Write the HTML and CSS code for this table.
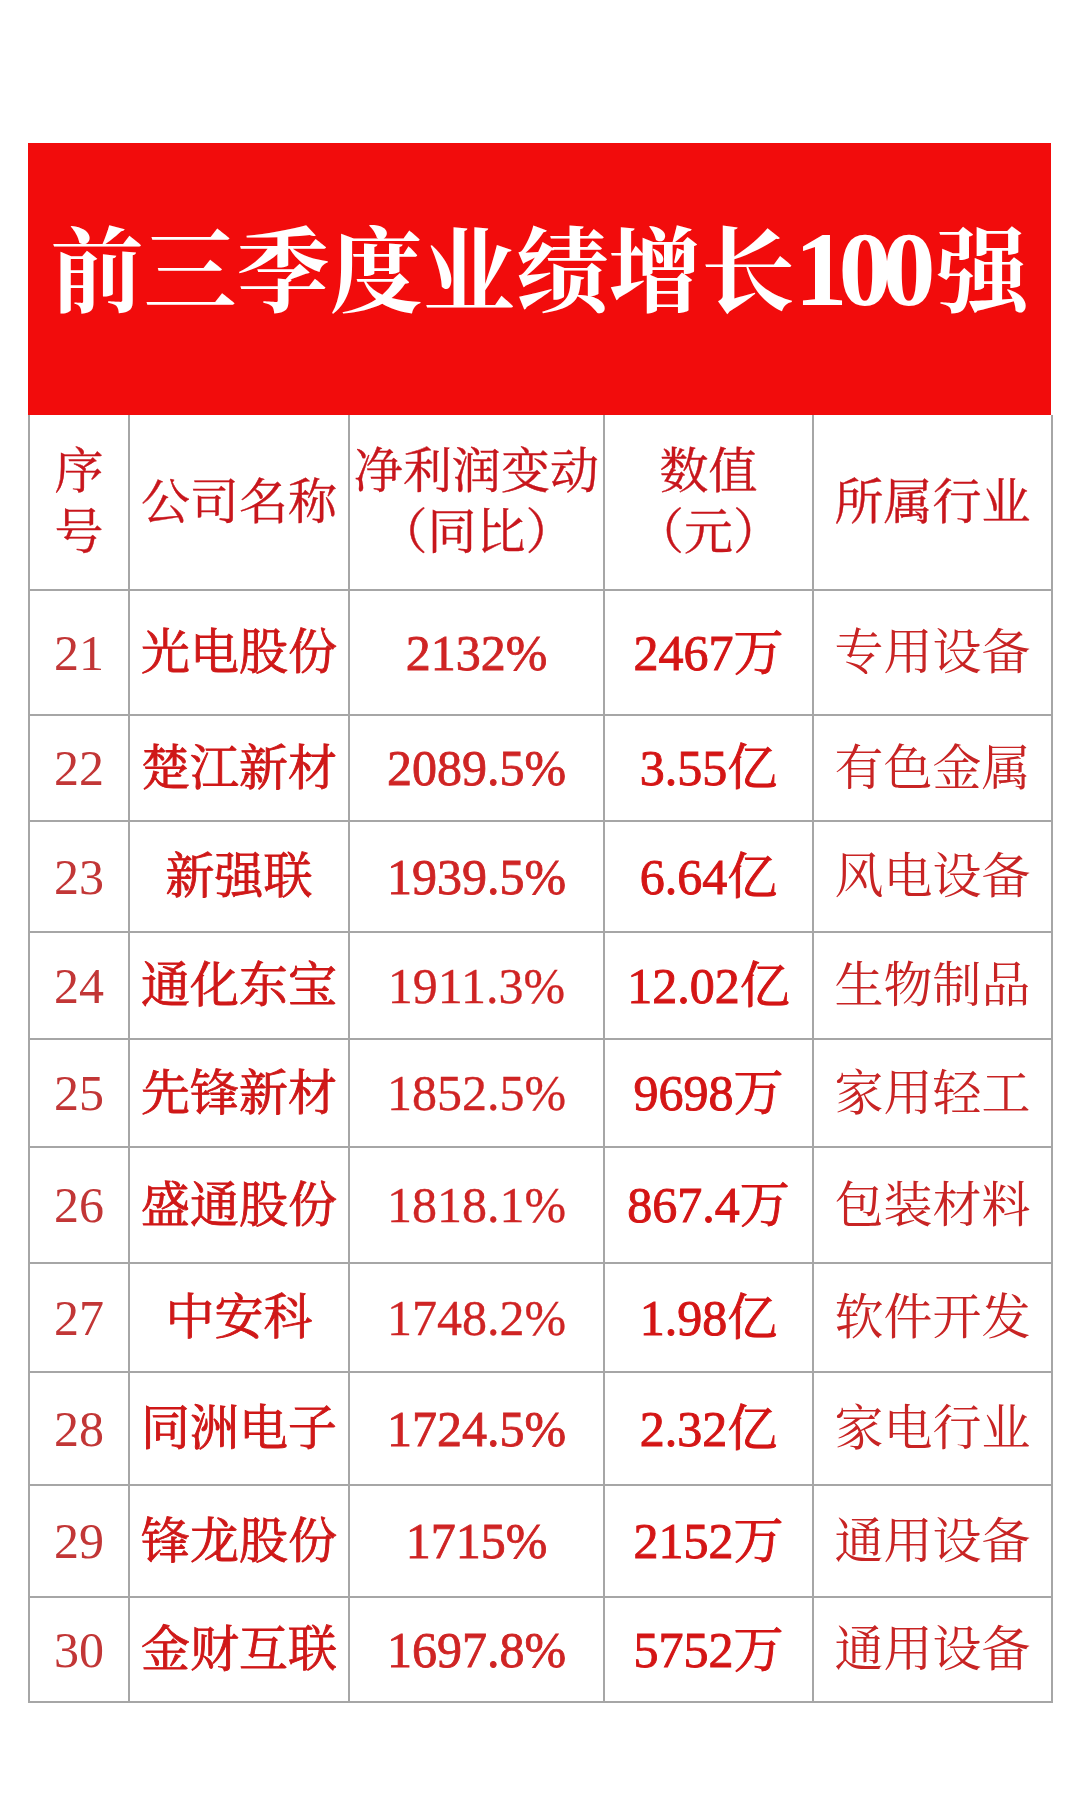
FILE: index.html
```html
<!DOCTYPE html>
<html lang="zh-CN">
<head>
<meta charset="utf-8">
<title>前三季度业绩增长100强</title>
<link rel="stylesheet" href="styles.css">
</head>
<body>
<div class="page">
  <div class="banner"><h1 class="title">前三季度业绩增长<span class="num">100</span>强</h1></div>
  <table class="rank">
    <colgroup>
      <col class="c1"><col class="c2"><col class="c3"><col class="c4"><col class="c5">
    </colgroup>
    <thead>
      <tr>
        <th><span class="stack">序<br>号</span></th>
        <th>公司名称</th>
        <th><span class="stack">净利润变动<br>（同比）</span></th>
        <th><span class="stack">数值<br>（元）</span></th>
        <th>所属行业</th>
      </tr>
    </thead>
    <tbody>
      <tr><td class="idx">21</td><td class="name">光电股份</td><td class="pct b">2132%</td><td class="val">2467万</td><td class="ind">专用设备</td></tr>
      <tr><td class="idx">22</td><td class="name">楚江新材</td><td class="pct b">2089.5%</td><td class="val">3.55亿</td><td class="ind">有色金属</td></tr>
      <tr><td class="idx">23</td><td class="name">新强联</td><td class="pct b">1939.5%</td><td class="val">6.64亿</td><td class="ind">风电设备</td></tr>
      <tr><td class="idx">24</td><td class="name">通化东宝</td><td class="pct">1911.3%</td><td class="val">12.02亿</td><td class="ind">生物制品</td></tr>
      <tr><td class="idx">25</td><td class="name">先锋新材</td><td class="pct">1852.5%</td><td class="val">9698万</td><td class="ind">家用轻工</td></tr>
      <tr><td class="idx">26</td><td class="name">盛通股份</td><td class="pct">1818.1%</td><td class="val">867.4万</td><td class="ind">包装材料</td></tr>
      <tr><td class="idx">27</td><td class="name">中安科</td><td class="pct">1748.2%</td><td class="val">1.98亿</td><td class="ind">软件开发</td></tr>
      <tr><td class="idx">28</td><td class="name">同洲电子</td><td class="pct b">1724.5%</td><td class="val">2.32亿</td><td class="ind">家电行业</td></tr>
      <tr><td class="idx">29</td><td class="name">锋龙股份</td><td class="pct b">1715%</td><td class="val">2152万</td><td class="ind">通用设备</td></tr>
      <tr><td class="idx">30</td><td class="name">金财互联</td><td class="pct b">1697.8%</td><td class="val">5752万</td><td class="ind">通用设备</td></tr>
    </tbody>
  </table>
</div>
</body>
</html>
```
FILE: styles.css
```css
html, body {
  margin: 0;
  padding: 0;
  background: #ffffff;
}

.page {
  padding: 143px 0 0 28px;
  font-family: "Liberation Serif", "Noto Serif CJK SC", "Noto Sans CJK SC", serif;
}

.banner {
  width: 1023px;
  height: 272px;
  background: #f20c0c;
  display: flex;
  align-items: center;
  justify-content: center;
  box-sizing: border-box;
  padding-bottom: 18px;
}

.title {
  margin: 0;
  color: #ffffff;
  font-family: "Noto Serif CJK SC", "Noto Sans CJK SC", serif;
  font-weight: 700;
  font-size: 93px;
  line-height: 1.1;
  white-space: nowrap;
}

.title .num {
  font-family: "Liberation Serif", serif;
  font-size: 106px;
  letter-spacing: -9px;
  margin-right: 9px;
}

.rank {
  width: 1023px;
  border-collapse: collapse;
  table-layout: fixed;
  color: #cc1f1f;
}

.c1 { width: 100px; }
.c2 { width: 220px; }
.c3 { width: 255px; }
.c4 { width: 209px; }
.c5 { width: 239px; }

.rank th,
.rank td {
  border: 2px solid #a6a6a6;
  padding: 0;
  text-align: center;
  vertical-align: middle;
  white-space: nowrap;
  font-size: 49px;
  font-weight: 400;
  line-height: 1;
}

.rank thead th {
  border-top: none;
  color: #c8161c;
  height: 174px;
  -webkit-text-stroke: 0.4px currentColor;
}

.stack {
  display: inline-block;
  line-height: 61px;
}

.rank td.idx {
  font-size: 50px;
  color: #c23636;
}

.rank td.name {
  color: #cf1818;
  -webkit-text-stroke: 0.9px currentColor;
}

.rank td.pct {
  font-size: 50px;
  color: #cf2424;
  -webkit-text-stroke: 0.3px currentColor;
}

.rank td.pct.b {
  -webkit-text-stroke: 0.8px currentColor;
}

.rank td.val {
  font-size: 50px;
  color: #d41515;
  -webkit-text-stroke: 0.9px currentColor;
}

.rank td.ind {
  color: #c82424;
}

.rank tbody tr:nth-child(1) { height: 125px; }
.rank tbody tr:nth-child(2) { height: 106px; }
.rank tbody tr:nth-child(3) { height: 111px; }
.rank tbody tr:nth-child(4) { height: 107px; }
.rank tbody tr:nth-child(5) { height: 108px; }
.rank tbody tr:nth-child(6) { height: 116px; }
.rank tbody tr:nth-child(7) { height: 109px; }
.rank tbody tr:nth-child(8) { height: 113px; }
.rank tbody tr:nth-child(9) { height: 112px; }
.rank tbody tr:nth-child(10) { height: 105px; }
```
